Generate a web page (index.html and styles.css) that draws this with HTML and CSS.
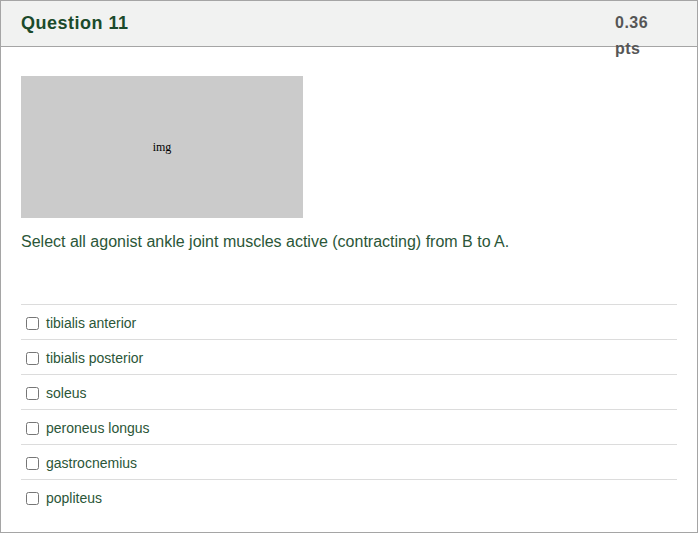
FILE: index.html
```html
<!DOCTYPE html>
<html>
<head>
<meta charset="utf-8">
<link rel="stylesheet" href="styles.css">
</head>
<body>
<div class="question">
  <div class="q-header">
    <h2 class="q-title">Question 11</h2>
    <div class="q-points">0.36 pts</div>
  </div>
  <div class="q-body">
    <div class="q-image">img</div>
    <p class="q-text">Select all agonist ankle joint muscles active (contracting) from B to A.</p>
    <div class="answers">
      <label class="answer"><input type="checkbox"><span>tibialis anterior</span></label>
      <label class="answer"><input type="checkbox"><span>tibialis posterior</span></label>
      <label class="answer"><input type="checkbox"><span>soleus</span></label>
      <label class="answer"><input type="checkbox"><span>peroneus longus</span></label>
      <label class="answer"><input type="checkbox"><span>gastrocnemius</span></label>
      <label class="answer"><input type="checkbox"><span>popliteus</span></label>
    </div>
  </div>
</div>
</body>
</html>
```

FILE: styles.css
```css
html, body {
  margin: 0;
  padding: 0;
  background: #fff;
}
body {
  font-family: "Liberation Sans", Arial, sans-serif;
}
.question {
  box-sizing: border-box;
  width: 698px;
  height: 533px;
  border: 1px solid #a5a5a5;
}
.q-header {
  box-sizing: border-box;
  height: 46px;
  background: #f1f2f1;
  border-bottom: 1px solid #a5a5a5;
  display: flex;
  justify-content: space-between;
  align-items: flex-start;
  padding: 9px 0 0 20px;
}
.q-title {
  margin: 0;
  font-size: 18px;
  line-height: 26px;
  font-weight: bold;
  letter-spacing: 0.5px;
  color: #1b4a2b;
}
.q-points {
  width: 45px;
  margin-right: 37px;
  font-size: 16px;
  line-height: 26px;
  font-weight: bold;
  letter-spacing: 0.5px;
  color: #565656;
}
.q-body {
  padding: 29px 20px 0 20px;
}
.q-image {
  width: 282px;
  height: 142px;
  background: #cbcbcb;
  display: flex;
  align-items: center;
  justify-content: center;
  font-family: "Liberation Serif", "Times New Roman", serif;
  font-size: 12px;
  color: #000;
}
.q-text {
  margin: 14px 0 52px 0;
  font-size: 16px;
  line-height: 20px;
  color: #2b5638;
}
.answers {
  display: flex;
  flex-direction: column;
}
.answer {
  box-sizing: border-box;
  height: 35px;
  border-top: 1px solid #dcdcdc;
  display: flex;
  align-items: center;
  padding: 2px 0 0 5px;
  gap: 7px;
  font-size: 14px;
  color: #2b5638;
}
.answer input {
  margin: 0;
  width: 13px;
  height: 13px;
}
```
